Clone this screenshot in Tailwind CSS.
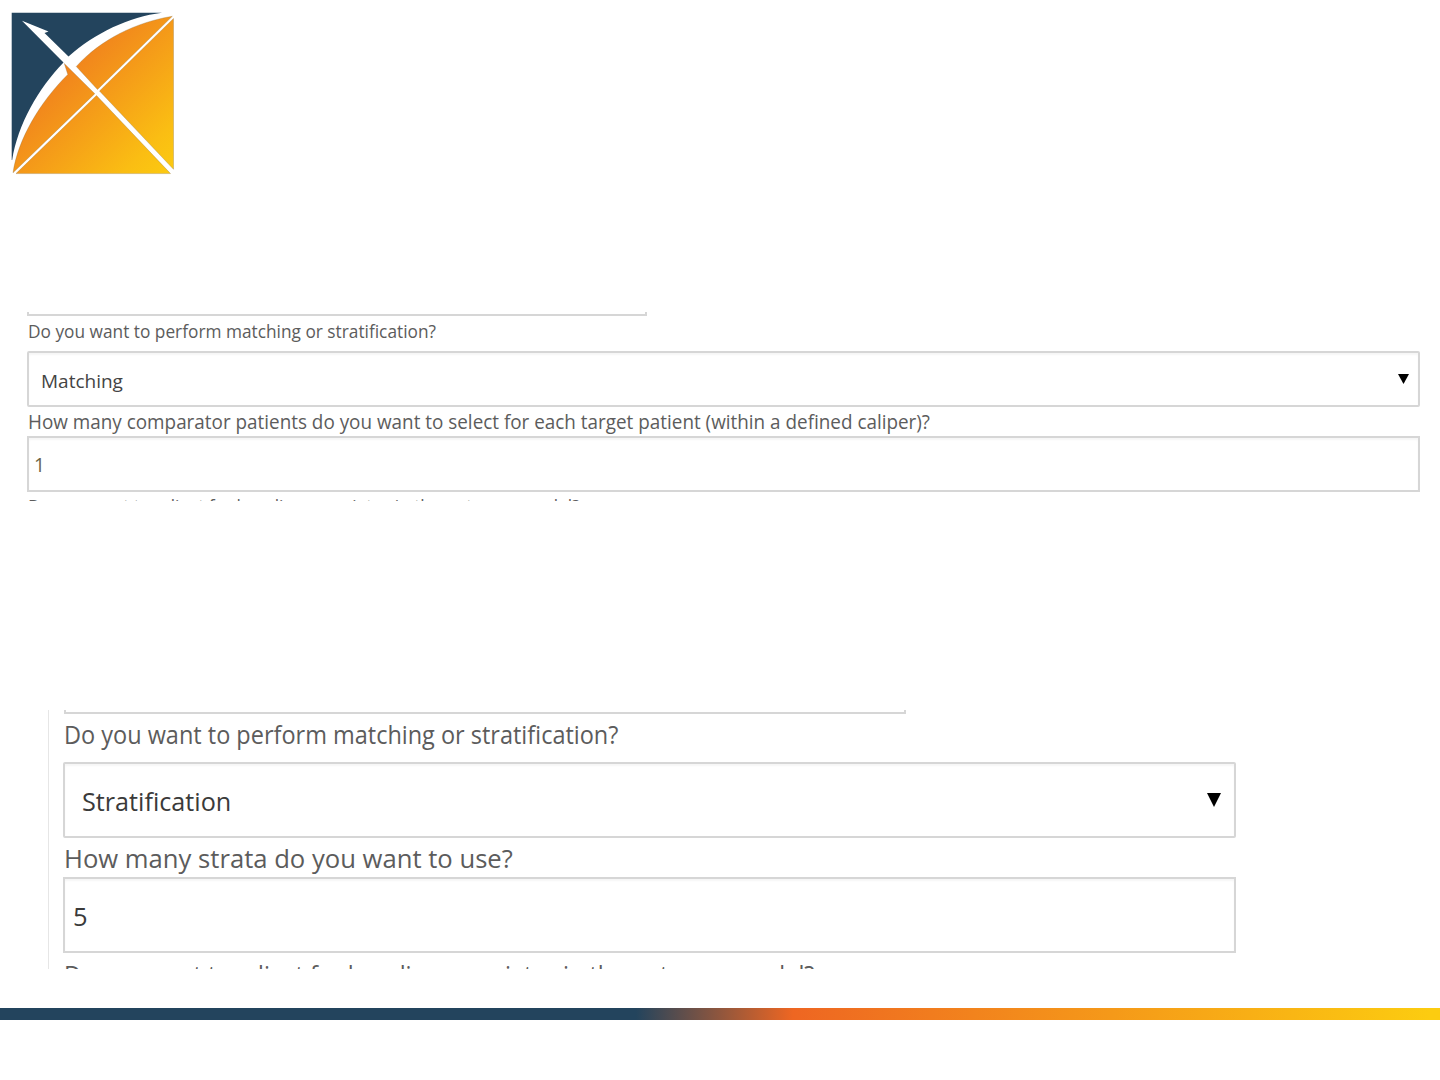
<!DOCTYPE html>
<html lang="en">
<head>
<meta charset="utf-8">
<title>Matching and stratification</title>
<script src="https://cdn.jsdelivr.net/npm/@tailwindcss/browser@4"></script>
</head>
<body class="bg-white">
<main class="flex h-[1080px] w-[1440px] flex-col overflow-hidden font-['Open_Sans',sans-serif] text-[#5c5c5c]">
  <header class="h-[312px] shrink-0">
    <svg class="block size-[190px]" viewBox="0 0 190 190" aria-label="Bow and arrow logo">
      <defs>
        <linearGradient id="amber" gradientUnits="userSpaceOnUse" x1="68" y1="68" x2="174" y2="174">
          <stop offset="0" stop-color="#f1841d"/><stop offset=".75" stop-color="#fabd13"/><stop offset="1" stop-color="#fccb10"/>
        </linearGradient>
      </defs>
      <path fill="#23445d" d="M11.7 12.8H162C129 17 95 33 68.500 56.500L44.500 33L48.500 31.500L22 20.800L63.500 62.500C38 89 18 124 12.200 160H11.700Z"/>
      <g fill="url(#amber)" stroke="#8b6a3a" stroke-opacity=".6" stroke-width=".5">
        <path d="M172.300 16.300C137 22 101 39 76.300 66.500L97.500 89.500Z"/>
        <path d="M64.300 63.500L94.800 93.700L13 172.800C18 139 40 102 67.800 74.500Z"/>
        <path d="M173.500 18.500V169.300L99.500 91Z"/>
        <path d="M96.500 95.500L170.500 173.600H16Z"/>
      </g>
    </svg>
  </header>

  <section class="ml-[27px] h-[189px] w-[1393px] shrink-0 overflow-hidden">
    <div class="h-1 w-[620px] border-2 border-t-0 border-[#d6d6d6]"></div>
    <div class="h-[35px] pl-px text-[18px] leading-[30px] whitespace-nowrap"><span class="inline-block origin-left scale-x-[.96]">Do you want to perform matching or stratification?</span></div>
    <div class="flex h-14 items-center justify-between rounded-xs border-2 border-[#d6d6d6] pr-[9px] pl-3 text-[19px] text-[#444] shadow-[inset_0_2px_2px_rgba(0,0,0,0.04)]">
      <span class="pt-1">Matching</span>
      <svg class="h-[10px] w-[11px]" viewBox="0 0 11 10"><path d="M0 0H11L5.500 10Z" fill="#000"/></svg>
    </div>
    <div class="h-[29px] pl-px text-[19.3px] leading-[30px] whitespace-nowrap"><span class="inline-block origin-left scale-x-[.979]">How many comparator patients do you want to select for each target patient (within a defined caliper)?</span></div>
    <div class="flex h-14 items-center border-2 border-[#d6d6d6] pt-[2px] pl-[5px] text-[19.3px] text-[#6b6346] shadow-[inset_0_2px_2px_rgba(0,0,0,0.04)]">1</div>
    <div class="pl-px text-[18px] leading-[29px] whitespace-nowrap"><span class="inline-block origin-left scale-x-[.96]">Do you want to adjust for baseline covariates in the outcome model?</span></div>
  </section>

  <section class="mt-[209px] ml-12 h-[259px] w-[1188px] shrink-0 overflow-hidden border-l border-[#e6e6e6] pl-[14px]">
    <div class="ml-px h-1 w-[842px] border-2 border-t-0 border-[#d6d6d6]"></div>
    <div class="h-12 pl-px text-[24.8px] leading-[41px] whitespace-nowrap"><span class="inline-block origin-left scale-x-[.947]">Do you want to perform matching or stratification?</span></div>
    <div class="flex h-[76px] items-center justify-between rounded-xs border-2 border-[#d6d6d6] pr-[13px] pl-[17px] text-[25.2px] text-[#3a3a3a] shadow-[inset_0_2px_2px_rgba(0,0,0,0.04)]">
      <span class="pt-1">Stratification</span>
      <svg class="h-[14px] w-[14px]" viewBox="0 0 14 14"><path d="M0 0H14L7 14Z" fill="#000"/></svg>
    </div>
    <div class="h-[39px] pl-px text-[26px] leading-[41px] whitespace-nowrap"><span class="inline-block origin-left scale-x-[.986]">How many strata do you want to use?</span></div>
    <div class="flex h-[76px] items-center border-2 border-[#d6d6d6] pt-[2px] pl-2 text-[25.5px] text-[#3a3a3a] shadow-[inset_0_2px_2px_rgba(0,0,0,0.04)]">5</div>
    <div class="pl-px text-[24.8px] leading-[42px] whitespace-nowrap"><span class="inline-block origin-left scale-x-[.948]">Do you want to adjust for baseline covariates in the outcome model?</span></div>
  </section>

  <footer class="mt-[39px] h-3 shrink-0 bg-[linear-gradient(90deg,#23445d_0,#23445d_636px,#ee6622_793px,#fccc10_1430px)]"></footer>
</main>
</body>
</html>
